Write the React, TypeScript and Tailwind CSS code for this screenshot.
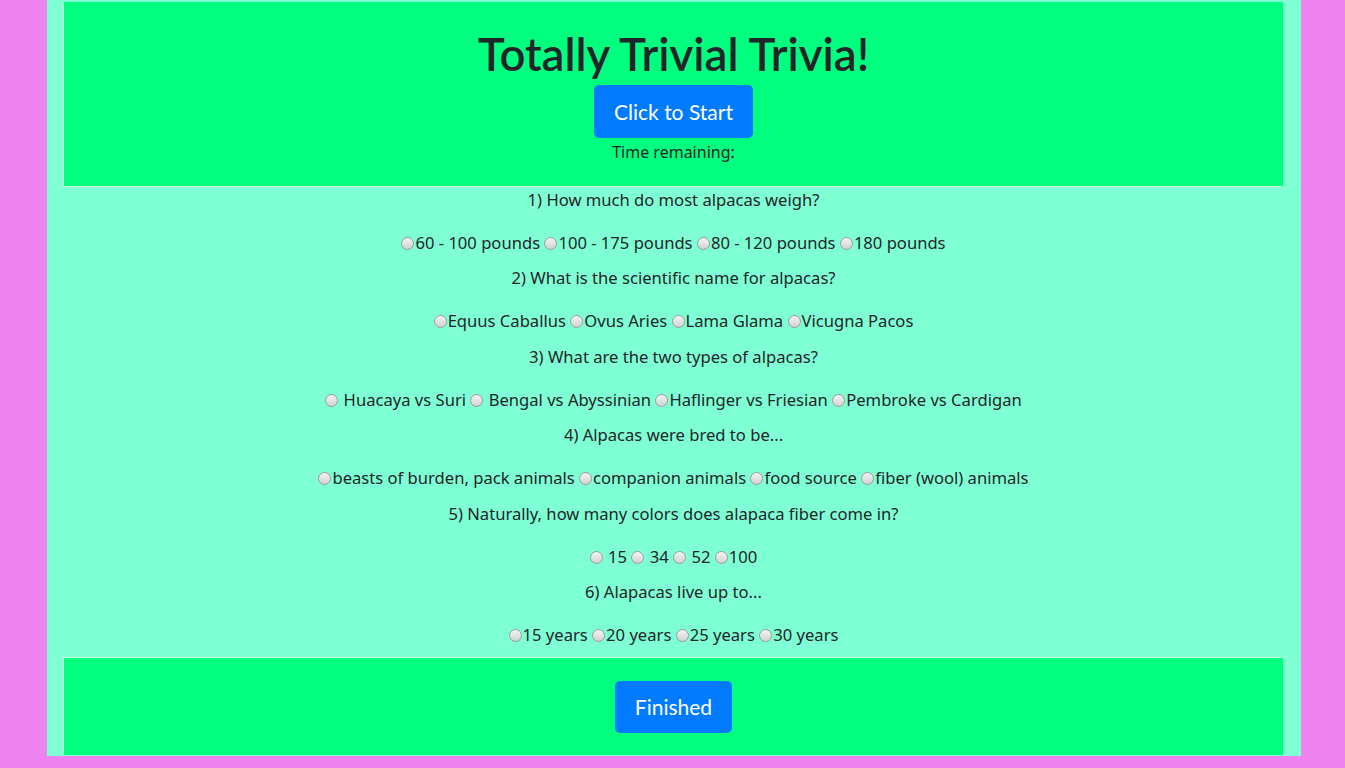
import React from "react";

const questions = [
  {
    q: "1) How much do most alpacas weigh?",
    options: ["60 - 100 pounds", "100 - 175 pounds", "80 - 120 pounds", "180 pounds"],
  },
  {
    q: "2) What is the scientific name for alpacas?",
    options: ["Equus Caballus", "Ovus Aries", "Lama Glama", "Vicugna Pacos"],
  },
  {
    q: "3) What are the two types of alpacas?",
    options: [" Huacaya vs Suri", " Bengal vs Abyssinian", "Haflinger vs Friesian", "Pembroke vs Cardigan"],
  },
  {
    q: "4) Alpacas were bred to be...",
    options: ["beasts of burden, pack animals", "companion animals", "food source", "fiber (wool) animals"],
  },
  {
    q: "5) Naturally, how many colors does alapaca fiber come in?",
    options: [" 15", " 34", " 52", "100"],
  },
  {
    q: "6) Alapacas live up to...",
    options: ["15 years", "20 years", "25 years", "30 years"],
  },
];

function Radio() {
  return (
    <span className="inline-block w-[13px] h-[13px] rounded-full border border-[#9a9a9a] bg-gradient-to-b from-[#f4f4f4] to-[#d2d2d2] mr-[1px] relative top-[-1px] align-middle" />
  );
}

export default function App() {
  return (
    <div
      className="min-h-screen bg-[#ee82ee] text-[#212529] text-[16.6px]"
      style={{ fontFamily: '"Noto Sans", "Lato", sans-serif' }}
    >
      <div className="ml-[47px] w-[1254px] bg-[#7fffd4] pl-[17px] pr-[18px] pt-[2px] pb-[1px]">
        <div
          className="bg-[#00ff7f] h-[184px] flex flex-col items-center shadow-[-1px_1px_0_#c8f5dc]"
          style={{ fontFamily: '"Lato", sans-serif' }}
        >
          <h1 className="text-[45.5px] font-semibold leading-[56px] mt-[24px]">Totally Trivial Trivia!</h1>
          <button className="mt-[3px] w-[159px] h-[53px] bg-[#007bff] text-white text-[21px] rounded-[5px]">
            Click to Start
          </button>
          <p
            className="mt-[2px] leading-6 text-[16px]"
            style={{ fontFamily: '"Noto Sans", sans-serif' }}
          >
            Time remaining:
          </p>
        </div>

        <div className="pt-[2px] text-center">
          {questions.map((item) => (
            <div key={item.q} className="pb-[11.4px]">
              <p className="leading-6 mb-[19px]">{item.q}</p>
              <div className="leading-6 whitespace-pre">
                {item.options.map((opt, i) => (
                  <React.Fragment key={opt}>
                    {i > 0 && " "}
                    <Radio />
                    {opt}
                  </React.Fragment>
                ))}
              </div>
            </div>
          ))}
        </div>

        <div
          className="bg-[#00ff7f] h-[97px] flex items-center justify-center shadow-[-1px_-1px_0_#c8f5dc]"
          style={{ fontFamily: '"Lato", sans-serif' }}
        >
          <button className="w-[117px] h-[52px] bg-[#007bff] text-white text-[21px] rounded-[5px]">Finished</button>
        </div>
      </div>
    </div>
  );
}
